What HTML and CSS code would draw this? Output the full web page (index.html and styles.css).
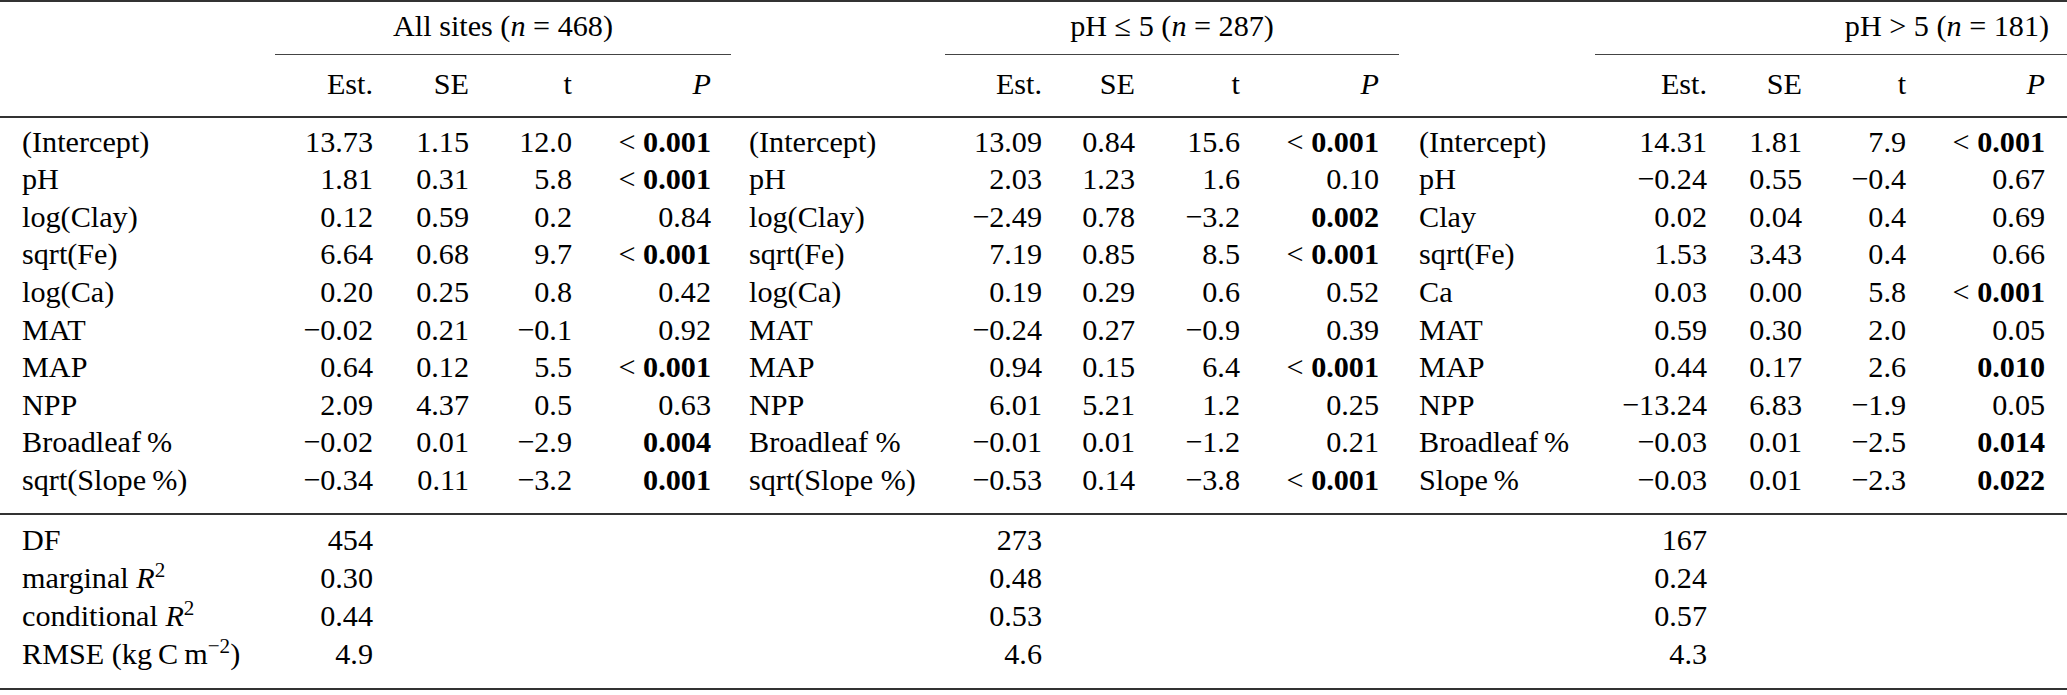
FILE: index.html
```html
<!DOCTYPE html>
<html lang="en">
<head>
<meta charset="utf-8">
<title>Model results</title>
<link rel="stylesheet" href="styles.css">
</head>
<body>
<table class="results">
  <colgroup>
    <col class="c1"><col class="c2"><col class="c3"><col class="c4"><col class="c5">
    <col class="c6"><col class="c7"><col class="c8"><col class="c9"><col class="c10">
    <col class="c11"><col class="c12"><col class="c13"><col class="c14"><col class="c15">
  </colgroup>
  <thead>
    <tr class="groups">
      <th class="blank"></th>
      <th class="grp" colspan="4">All sites (<i>n</i> = 468)</th>
      <th class="blank"></th>
      <th class="grp" colspan="4">pH ≤ 5 (<i>n</i> = 287)</th>
      <th class="blank"></th>
      <th class="grp grp-last" colspan="4">pH &gt; 5 (<i>n</i> = 181)</th>
    </tr>
    <tr class="cols">
      <th class="lbl"></th><th>Est.</th><th>SE</th><th>t</th><th><i>P</i></th>
      <th class="lbl l2"></th><th>Est.</th><th>SE</th><th>t</th><th><i>P</i></th>
      <th class="lbl l3"></th><th>Est.</th><th>SE</th><th>t</th><th class="plast"><i>P</i></th>
    </tr>
  </thead>
  <tbody class="coef">
    <tr>
      <td class="lbl">(Intercept)</td><td>13.73</td><td>1.15</td><td>12.0</td><td>&lt; <b>0.001</b></td>
      <td class="lbl l2">(Intercept)</td><td>13.09</td><td>0.84</td><td>15.6</td><td>&lt; <b>0.001</b></td>
      <td class="lbl l3">(Intercept)</td><td>14.31</td><td>1.81</td><td>7.9</td><td class="plast">&lt; <b>0.001</b></td>
    </tr>
    <tr>
      <td class="lbl">pH</td><td>1.81</td><td>0.31</td><td>5.8</td><td>&lt; <b>0.001</b></td>
      <td class="lbl l2">pH</td><td>2.03</td><td>1.23</td><td>1.6</td><td>0.10</td>
      <td class="lbl l3">pH</td><td>−0.24</td><td>0.55</td><td>−0.4</td><td class="plast">0.67</td>
    </tr>
    <tr>
      <td class="lbl">log(Clay)</td><td>0.12</td><td>0.59</td><td>0.2</td><td>0.84</td>
      <td class="lbl l2">log(Clay)</td><td>−2.49</td><td>0.78</td><td>−3.2</td><td><b>0.002</b></td>
      <td class="lbl l3">Clay</td><td>0.02</td><td>0.04</td><td>0.4</td><td class="plast">0.69</td>
    </tr>
    <tr>
      <td class="lbl">sqrt(Fe)</td><td>6.64</td><td>0.68</td><td>9.7</td><td>&lt; <b>0.001</b></td>
      <td class="lbl l2">sqrt(Fe)</td><td>7.19</td><td>0.85</td><td>8.5</td><td>&lt; <b>0.001</b></td>
      <td class="lbl l3">sqrt(Fe)</td><td>1.53</td><td>3.43</td><td>0.4</td><td class="plast">0.66</td>
    </tr>
    <tr>
      <td class="lbl">log(Ca)</td><td>0.20</td><td>0.25</td><td>0.8</td><td>0.42</td>
      <td class="lbl l2">log(Ca)</td><td>0.19</td><td>0.29</td><td>0.6</td><td>0.52</td>
      <td class="lbl l3">Ca</td><td>0.03</td><td>0.00</td><td>5.8</td><td class="plast">&lt; <b>0.001</b></td>
    </tr>
    <tr>
      <td class="lbl">MAT</td><td>−0.02</td><td>0.21</td><td>−0.1</td><td>0.92</td>
      <td class="lbl l2">MAT</td><td>−0.24</td><td>0.27</td><td>−0.9</td><td>0.39</td>
      <td class="lbl l3">MAT</td><td>0.59</td><td>0.30</td><td>2.0</td><td class="plast">0.05</td>
    </tr>
    <tr>
      <td class="lbl">MAP</td><td>0.64</td><td>0.12</td><td>5.5</td><td>&lt; <b>0.001</b></td>
      <td class="lbl l2">MAP</td><td>0.94</td><td>0.15</td><td>6.4</td><td>&lt; <b>0.001</b></td>
      <td class="lbl l3">MAP</td><td>0.44</td><td>0.17</td><td>2.6</td><td class="plast"><b>0.010</b></td>
    </tr>
    <tr>
      <td class="lbl">NPP</td><td>2.09</td><td>4.37</td><td>0.5</td><td>0.63</td>
      <td class="lbl l2">NPP</td><td>6.01</td><td>5.21</td><td>1.2</td><td>0.25</td>
      <td class="lbl l3">NPP</td><td>−13.24</td><td>6.83</td><td>−1.9</td><td class="plast">0.05</td>
    </tr>
    <tr>
      <td class="lbl">Broadleaf&thinsp;%</td><td>−0.02</td><td>0.01</td><td>−2.9</td><td><b>0.004</b></td>
      <td class="lbl l2">Broadleaf %</td><td>−0.01</td><td>0.01</td><td>−1.2</td><td>0.21</td>
      <td class="lbl l3">Broadleaf&thinsp;%</td><td>−0.03</td><td>0.01</td><td>−2.5</td><td class="plast"><b>0.014</b></td>
    </tr>
    <tr>
      <td class="lbl">sqrt(Slope&thinsp;%)</td><td>−0.34</td><td>0.11</td><td>−3.2</td><td><b>0.001</b></td>
      <td class="lbl l2">sqrt(Slope %)</td><td>−0.53</td><td>0.14</td><td>−3.8</td><td>&lt; <b>0.001</b></td>
      <td class="lbl l3">Slope&thinsp;%</td><td>−0.03</td><td>0.01</td><td>−2.3</td><td class="plast"><b>0.022</b></td>
    </tr>
  </tbody>
  <tbody class="fit">
    <tr>
      <td class="lbl">DF</td><td>454</td><td></td><td></td><td></td>
      <td class="lbl l2"></td><td>273</td><td></td><td></td><td></td>
      <td class="lbl l3"></td><td>167</td><td></td><td></td><td class="plast"></td>
    </tr>
    <tr>
      <td class="lbl">marginal <i>R</i><sup>2</sup></td><td>0.30</td><td></td><td></td><td></td>
      <td class="lbl l2"></td><td>0.48</td><td></td><td></td><td></td>
      <td class="lbl l3"></td><td>0.24</td><td></td><td></td><td class="plast"></td>
    </tr>
    <tr>
      <td class="lbl">conditional <i>R</i><sup>2</sup></td><td>0.44</td><td></td><td></td><td></td>
      <td class="lbl l2"></td><td>0.53</td><td></td><td></td><td></td>
      <td class="lbl l3"></td><td>0.57</td><td></td><td></td><td class="plast"></td>
    </tr>
    <tr>
      <td class="lbl">RMSE (kg&thinsp;C&thinsp;m<sup>−2</sup>)</td><td>4.9</td><td></td><td></td><td></td>
      <td class="lbl l2"></td><td>4.6</td><td></td><td></td><td></td>
      <td class="lbl l3"></td><td>4.3</td><td></td><td></td><td class="plast"></td>
    </tr>
  </tbody>
</table>
</body>
</html>
```

FILE: styles.css
```css
html, body {
  margin: 0;
  padding: 0;
  background: #ffffff;
}

body {
  font-family: "Liberation Serif", "Times New Roman", serif;
  font-size: 30.2px;
  color: #000000;
}

.results {
  border-collapse: separate;
  border-spacing: 0;
  table-layout: fixed;
  width: 2067px;
  border-top: 2px solid #333333;
  border-bottom: 2px solid #333333;
}

.c1 { width: 275px; }
.c2 { width: 118px; }
.c3 { width: 96px; }
.c4 { width: 103px; }
.c5 { width: 139px; }
.c6 { width: 214px; }
.c7 { width: 117px; }
.c8 { width: 93px; }
.c9 { width: 105px; }
.c10 { width: 139px; }
.c11 { width: 196px; }
.c12 { width: 132px; }
.c13 { width: 95px; }
.c14 { width: 104px; }
.c15 { width: 141px; }

.results th,
.results td {
  padding: 0 20px 0 0;
  line-height: 37.6px;
  text-align: right;
  font-weight: normal;
  vertical-align: top;
  white-space: nowrap;
}

.results b {
  font-weight: bold;
}

.results .lbl {
  text-align: left;
  padding-left: 22px;
  padding-right: 0;
}

.results .l2 { padding-left: 18px; }
.results .l3 { padding-left: 20px; }
.results .plast { padding-right: 22px; }

/* group header row */
.groups th {
  padding-top: 6px;
  padding-bottom: 8px;
}

.groups .grp {
  text-align: center;
  padding-left: 0;
  padding-right: 0;
  border-bottom: 1.5px solid #444444;
}

.groups .grp-last {
  text-align: right;
  padding-right: 18px;
}

/* column header row */
.cols th {
  padding-top: 11px;
  padding-bottom: 13px;
  border-bottom: 2px solid #333333;
}

/* coefficient rows */
.coef tr:first-child td { padding-top: 5.4px; }
.coef tr:last-child td { padding-bottom: 13px; }

/* fit statistics */
.fit td { line-height: 38px; }
.fit tr:first-child td {
  border-top: 2px solid #333333;
  padding-top: 6.6px;
}
.fit tr:last-child td { padding-bottom: 14.4px; }

sup {
  font-size: 70%;
  line-height: 0;
  vertical-align: 0.5em;
}
```
